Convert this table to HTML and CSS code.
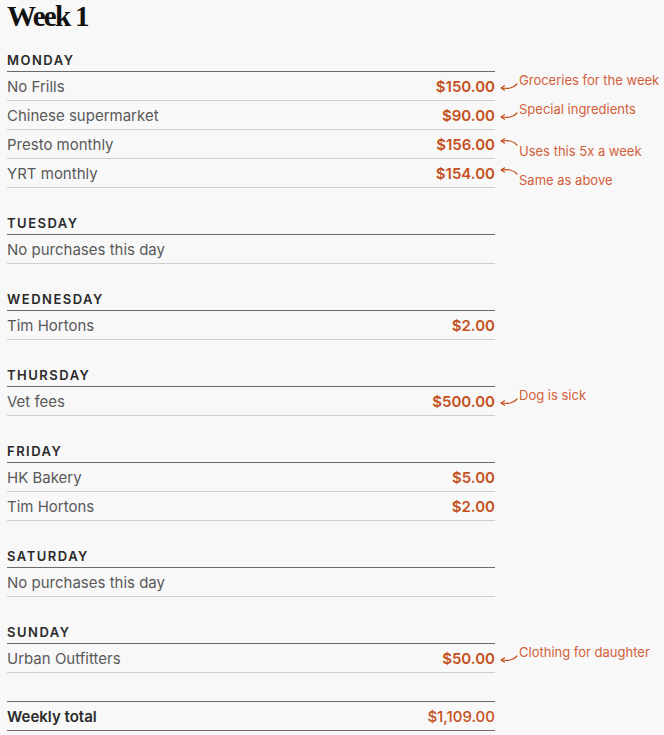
FILE: index.html
```html
<!DOCTYPE html>
<html>
<head>
<meta charset="utf-8">
<link rel="stylesheet" href="styles.css">
</head>
<body>
<main class="page">
  <h1 class="title">Week 1</h1>

  <section class="day">
    <h2 class="day-name">Monday</h2>
    <div class="row">
      <span class="item">No Frills</span><span class="amount">$150.00</span>
      <div class="note note-up">
        <svg class="arrow" viewBox="0 0 18 12" width="18" height="12"><path d="M1 8 C8 8.6 13 8.8 17 4 M4.6 5.8 L1 8 L4.6 10.2" /></svg>
        <span>Groceries for the week</span>
      </div>
    </div>
    <div class="row">
      <span class="item">Chinese supermarket</span><span class="amount">$90.00</span>
      <div class="note note-up">
        <svg class="arrow" viewBox="0 0 18 12" width="18" height="12"><path d="M1 8 C8 8.6 13 8.8 17 4 M4.6 5.8 L1 8 L4.6 10.2" /></svg>
        <span>Special ingredients</span>
      </div>
    </div>
    <div class="row">
      <span class="item">Presto monthly</span><span class="amount">$156.00</span>
      <div class="note note-down">
        <svg class="arrow" viewBox="0 0 18 12" width="18" height="12"><path d="M1 4 C8 3.4 13 3.2 17 8 M4.6 1.8 L1 4 L4.6 6.2" /></svg>
        <span>Uses this 5x a week</span>
      </div>
    </div>
    <div class="row">
      <span class="item">YRT monthly</span><span class="amount">$154.00</span>
      <div class="note note-down">
        <svg class="arrow" viewBox="0 0 18 12" width="18" height="12"><path d="M1 4 C8 3.4 13 3.2 17 8 M4.6 1.8 L1 4 L4.6 6.2" /></svg>
        <span>Same as above</span>
      </div>
    </div>
  </section>

  <section class="day">
    <h2 class="day-name">Tuesday</h2>
    <div class="row"><span class="item">No purchases this day</span></div>
  </section>

  <section class="day">
    <h2 class="day-name">Wednesday</h2>
    <div class="row"><span class="item">Tim Hortons</span><span class="amount">$2.00</span></div>
  </section>

  <section class="day">
    <h2 class="day-name">Thursday</h2>
    <div class="row">
      <span class="item">Vet fees</span><span class="amount">$500.00</span>
      <div class="note note-up">
        <svg class="arrow" viewBox="0 0 18 12" width="18" height="12"><path d="M1 8 C8 8.6 13 8.8 17 4 M4.6 5.8 L1 8 L4.6 10.2" /></svg>
        <span>Dog is sick</span>
      </div>
    </div>
  </section>

  <section class="day">
    <h2 class="day-name">Friday</h2>
    <div class="row"><span class="item">HK Bakery</span><span class="amount">$5.00</span></div>
    <div class="row"><span class="item">Tim Hortons</span><span class="amount">$2.00</span></div>
  </section>

  <section class="day">
    <h2 class="day-name">Saturday</h2>
    <div class="row"><span class="item">No purchases this day</span></div>
  </section>

  <section class="day">
    <h2 class="day-name">Sunday</h2>
    <div class="row">
      <span class="item">Urban Outfitters</span><span class="amount">$50.00</span>
      <div class="note note-up">
        <svg class="arrow" viewBox="0 0 18 12" width="18" height="12"><path d="M1 8 C8 8.6 13 8.8 17 4 M4.6 5.8 L1 8 L4.6 10.2" /></svg>
        <span>Clothing for daughter</span>
      </div>
    </div>
  </section>

  <div class="total">
    <span class="total-label">Weekly total</span><span class="total-amount">$1,109.00</span>
  </div>
</main>
</body>
</html>
```

FILE: styles.css
```css
html, body {
  margin: 0;
  padding: 0;
  background: #f8f8f8;
}

body {
  font-family: Inter, "Noto Sans", sans-serif;
  color: #555;
}

.page {
  width: 488px;
  padding: 0 7px;
}

.title {
  margin: 0;
  font-family: "Liberation Serif", "Times New Roman", serif;
  font-weight: 700;
  font-size: 29px;
  line-height: 32px;
  letter-spacing: -1.7px;
  color: #111;
}

.day {
  margin-top: 24px;
}

.title + .day {
  margin-top: 17px;
}

.day-name {
  margin: 0;
  height: 22px;
  line-height: 22px;
  font-size: 13px;
  font-weight: 600;
  letter-spacing: 1.5px;
  text-transform: uppercase;
  color: #2a2a2a;
  border-bottom: 1px solid #6a6a6a;
}

.row {
  position: relative;
  display: flex;
  justify-content: space-between;
  align-items: center;
  height: 28px;
  border-bottom: 1px solid #cfcfcf;
  font-size: 15px;
}

.item {
  color: #585858;
}

.amount {
  color: #c4501c;
  font-weight: 600;
}

.note {
  position: absolute;
  left: 493px;
  display: flex;
  align-items: flex-start;
  white-space: nowrap;
  font-size: 13px;
  line-height: 16px;
  color: #d2603a;
}

.note span {
  margin-left: 1px;
}

.note-up {
  top: 0;
}

.note-up .arrow {
  margin-top: 8px;
}

.note-down {
  top: 13px;
}

.note-down .arrow {
  margin-top: -6px;
}

.arrow {
  flex: none;
  fill: none;
  stroke: #c4501c;
  stroke-width: 1.2;
  stroke-linecap: round;
  stroke-linejoin: round;
}

.total {
  margin-top: 28px;
  display: flex;
  justify-content: space-between;
  align-items: center;
  height: 28px;
  border-top: 1px solid #6a6a6a;
  border-bottom: 1px solid #6a6a6a;
  font-size: 15px;
}

.total-label {
  font-weight: 600;
  color: #2a2a2a;
}

.total-amount {
  color: #c4501c;
  font-weight: 500;
}
```
